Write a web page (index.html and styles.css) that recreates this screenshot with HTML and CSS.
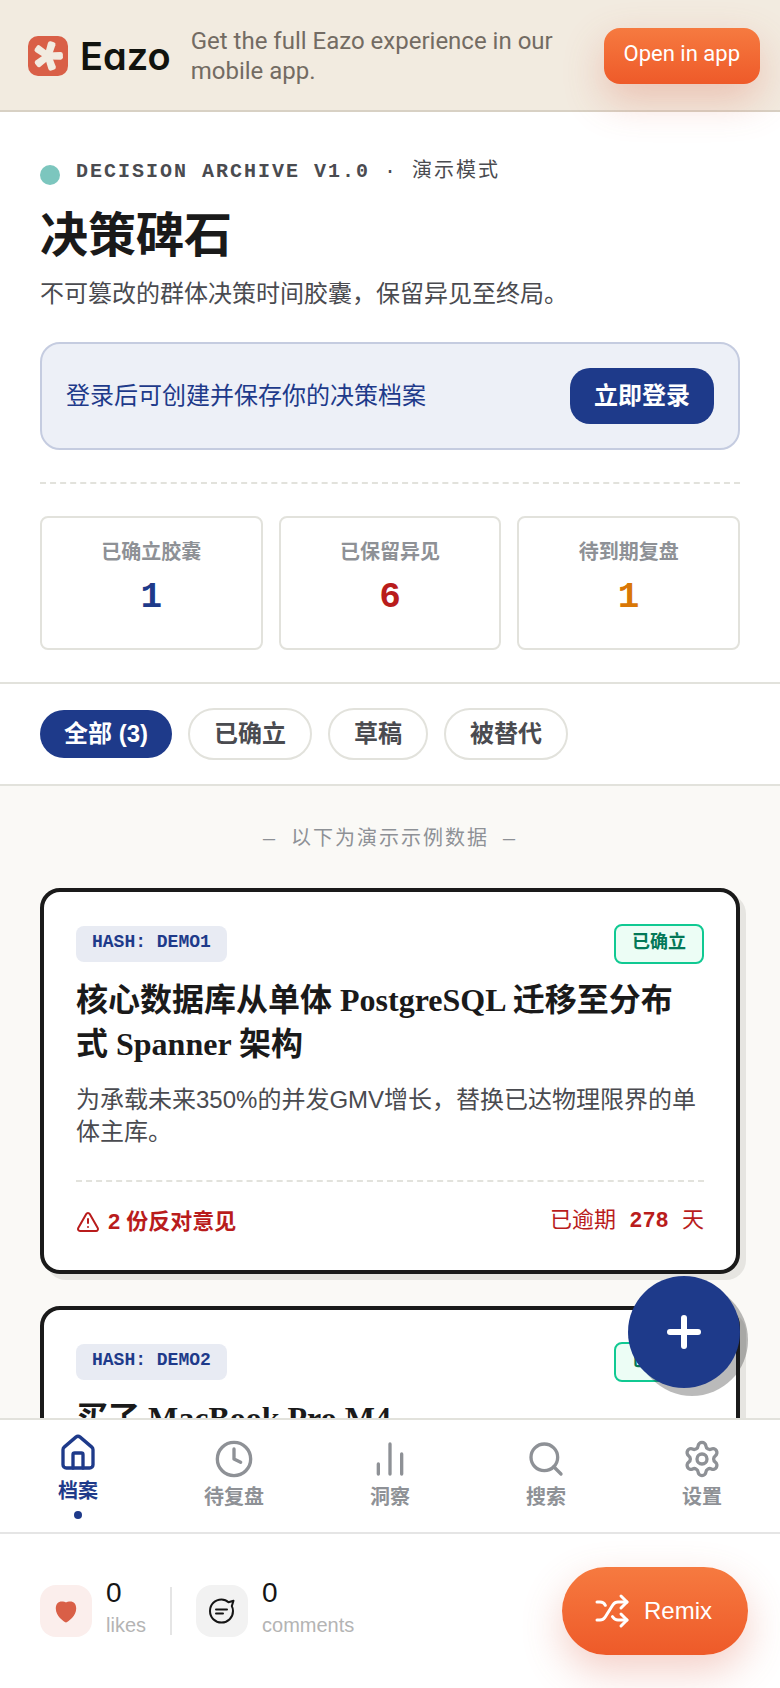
FILE: index.html
```html
<!DOCTYPE html>
<html lang="zh-CN">
<head>
  <meta charset="UTF-8" />
  <meta name="viewport" content="width=device-width, initial-scale=1.0"/>
  <title>决策碑石</title>
  <link rel="stylesheet" href="styles.css">
</head>
<body>

<div class="banner">
  <a class="logo" href="#">
    <svg width="40" height="40" viewBox="0 0 40 40" aria-hidden="true">
      <rect width="40" height="40" rx="10" fill="#d95f47"/>
      <g fill="#f2ebe0" transform="translate(20 20)">
        <path id="petalo" d="M-3.400 1 L-3.900 -12.500 Q-3.900 -14.800 -1.600 -14.900 L1.600 -14.900 Q3.900 -14.800 3.900 -12.500 L3.400 1 Z" transform="rotate(17)"/>
        <use href="#petalo" transform="rotate(72)"/>
        <use href="#petalo" transform="rotate(144)"/>
        <use href="#petalo" transform="rotate(216)"/>
        <use href="#petalo" transform="rotate(288)"/>
      </g>
    </svg>
    <span>Eazo</span>
  </a>
  <p>Get the full Eazo experience in our mobile app.</p>
  <button class="open-app">Open in app</button>
</div>

<main class="content">
  <header class="hero">
    <div class="version">
      <span class="dot"></span>
      <p><strong>DECISION ARCHIVE V1.0</strong> · 演示模式</p>
    </div>
    <h1>决策碑石</h1>
    <p class="subtitle">不可篡改的群体决策时间胶囊，保留异见至终局。</p>

    <div class="login">
      <p>登录后可创建并保存你的决策档案</p>
      <button>立即登录</button>
    </div>

    <div class="stats">
      <div class="stat">
        <h2>已确立胶囊</h2>
        <p class="blue">1</p>
      </div>
      <div class="stat">
        <h2>已保留异见</h2>
        <p class="red">6</p>
      </div>
      <div class="stat">
        <h2>待到期复盘</h2>
        <p class="amber">1</p>
      </div>
    </div>
  </header>

  <div class="filters">
    <button class="active">全部 (3)</button>
    <button>已确立</button>
    <button>草稿</button>
    <button>被替代</button>
  </div>

  <section class="list">
    <p class="notice">— 以下为演示示例数据 —</p>

    <article class="card">
      <div class="card-top">
        <span class="hash">HASH: DEMO1</span>
        <span class="status">已确立</span>
      </div>
      <h3>核心数据库从单体 PostgreSQL 迁移至分布式 Spanner 架构</h3>
      <p class="desc">为承载未来350%的并发GMV增长，替换已达物理限界的单体主库。</p>
      <div class="card-bottom">
        <span class="against">
          <svg class="icon" width="24" height="24" viewBox="0 0 24 24" aria-hidden="true">
            <path d="m21.730 18-8-14a2 2 0 0 0-3.480 0l-8 14A2 2 0 0 0 4 21h16a2 2 0 0 0 1.730-3"/>
            <path d="M12 9v4"/>
            <path d="M12 17h.01"/>
          </svg>
          2 份反对意见
        </span>
        <span class="overdue">已逾期 <strong>278</strong> 天</span>
      </div>
    </article>

    <article class="card">
      <div class="card-top">
        <span class="hash">HASH: DEMO2</span>
        <span class="status">已确立</span>
      </div>
      <h3>买了 MacBook Pro M4</h3>
    </article>
  </section>

  <button class="fab" aria-label="新建">
    <svg class="icon" width="48" height="48" viewBox="0 0 24 24" aria-hidden="true">
      <path d="M5 12h14"/>
      <path d="M12 5v14"/>
    </svg>
  </button>
</main>

<nav class="tabs">
  <a class="active" href="#">
    <svg class="icon" width="40" height="40" viewBox="0 0 24 24" aria-hidden="true">
      <path d="M15 21v-8a1 1 0 0 0-1-1h-4a1 1 0 0 0-1 1v8"/>
      <path d="M3 10a2 2 0 0 1 .709-1.528l7-5.999a2 2 0 0 1 2.582 0l7 5.999A2 2 0 0 1 21 10v9a2 2 0 0 1-2 2H5a2 2 0 0 1-2-2z"/>
    </svg>
    档案
  </a>
  <a href="#">
    <svg class="icon" width="40" height="40" viewBox="0 0 24 24" aria-hidden="true">
      <circle cx="12" cy="12" r="10"/>
      <path d="M12 6v6l4 2"/>
    </svg>
    待复盘
  </a>
  <a href="#">
    <svg class="icon" width="40" height="40" viewBox="0 0 24 24" aria-hidden="true">
      <path d="M5 21v-6"/>
      <path d="M12 21V3"/>
      <path d="M19 21V9"/>
    </svg>
    洞察
  </a>
  <a href="#">
    <svg class="icon" width="40" height="40" viewBox="0 0 24 24" aria-hidden="true">
      <circle cx="11" cy="11" r="8"/>
      <path d="m21 21-4.340-4.340"/>
    </svg>
    搜索
  </a>
  <a href="#">
    <svg class="icon" width="40" height="40" viewBox="0 0 24 24" aria-hidden="true">
      <path d="M9.671 4.136a2.340 2.340 0 0 1 4.659 0 2.340 2.340 0 0 0 3.319 1.915 2.340 2.340 0 0 1 2.330 4.033 2.340 2.340 0 0 0 0 3.831 2.340 2.340 0 0 1-2.330 4.033 2.340 2.340 0 0 0-3.319 1.915 2.340 2.340 0 0 1-4.659 0 2.340 2.340 0 0 0-3.320-1.915 2.340 2.340 0 0 1-2.330-4.033 2.340 2.340 0 0 0 0-3.831A2.340 2.340 0 0 1 6.350 6.051a2.340 2.340 0 0 0 3.319-1.915"/>
      <circle cx="12" cy="12" r="3"/>
    </svg>
    设置
  </a>
</nav>

<footer class="social">
  <button class="count">
    <span class="tile like">
      <svg width="24" height="24" viewBox="0 0 24 24" aria-hidden="true">
        <path fill="#d95f47" d="M12 23.500C9.500 22.500 1.800 17 1.800 9.500 1.800 5 4.200 2.500 7.800 2.500c1.700 0 3.200.3 4.200 1 1-.7 2.500-1 4.200-1 3.600 0 6 2.500 6 7C22.200 17 14.500 22.500 12 23.500z"/>
      </svg>
    </span>
    <span class="number"><b>0</b>likes</span>
  </button>
  <span class="divider"></span>
  <button class="count">
    <span class="tile">
      <svg class="icon" width="28" height="28" viewBox="0 0 28 28" aria-hidden="true">
        <path d="M20.500 5.300C18.600 3.400 16 2.500 13.500 2.500 7 2.500 2 7.500 2 14s5 11.500 11.500 11.500S25 20.500 25 14c0-1.700-.4-3.400-1.200-4.900L25.500 3.800z"/>
        <path d="M8 12.500h11M8 16.500h7"/>
      </svg>
    </span>
    <span class="number"><b>0</b>comments</span>
  </button>
  <button class="remix">
    <svg class="icon" width="36" height="36" viewBox="0 0 24 24" aria-hidden="true">
      <path d="m18 14 4 4-4 4"/>
      <path d="m18 2 4 4-4 4"/>
      <path d="M2 18h1.973a4 4 0 0 0 3.300-1.700l5.454-8.600a4 4 0 0 1 3.300-1.700H22"/>
      <path d="M2 6h1.972a4 4 0 0 1 3.600 2.200"/>
      <path d="M22 18h-6.041a4 4 0 0 1-3.300-1.800l-.359-.45"/>
    </svg>
    Remix
  </button>
</footer>

</body>
</html>
```
FILE: styles.css
```css
* {
  box-sizing: border-box;
}

body {
  margin: 0;
  height: 100vh;
  display: flex;
  flex-direction: column;
  overflow: hidden;
  background: white;
  color: #4a4b50;
  font-family: "Liberation Sans", "Noto Sans CJK SC", sans-serif;
  font-size: 24px;
  line-height: 32px;
}

h1, h2, h3, p {
  margin: 0;
}

button {
  font: inherit;
  border: none;
  padding: 0;
  cursor: pointer;
}

a {
  color: inherit;
  text-decoration: none;
}

.icon {
  flex-shrink: 0;
  fill: none;
  stroke: currentColor;
  stroke-width: 2;
  stroke-linecap: round;
  stroke-linejoin: round;
}

.banner {
  position: relative;
  z-index: 1;
  display: flex;
  align-items: center;
  gap: 20px;
  padding: 26px 20px 24px 28px;
  background: #f2ebe0;
  border-bottom: 2px solid #d8d1c4;
  font-family: Roboto, sans-serif;
}

.logo {
  display: flex;
  align-items: center;
  gap: 12px;
  color: #11130e;
  font-family: Inter, sans-serif;
  font-size: 38px;
  font-weight: 600;
  font-feature-settings: "cv11";
}

.logo svg {
  flex-shrink: 0;
}

.banner p {
  flex: 1;
  max-width: 380px;
  line-height: 30px;
  color: #736b63;
}

.open-app {
  flex-shrink: 0;
  margin-left: auto;
  padding: 10px 20px 14px;
  border-radius: 16px;
  background: linear-gradient(#f67a40, #ee5a29);
  box-shadow: 0 16px 40px rgba(217, 95, 71, 0.3);
  color: white;
  font-size: 22px;
}

.content {
  position: relative;
  flex: 1;
  min-height: 0;
  overflow: hidden;
  background: #faf9f6;
}

.hero {
  padding: 44px 40px 32px;
  background: white;
  border-bottom: 2px solid #e2e2dc;
}

.version {
  display: flex;
  align-items: center;
  gap: 16px;
  font-family: "Liberation Mono", "Noto Sans CJK SC", monospace;
  font-size: 20px;
  letter-spacing: 2px;
}

.version p {
  padding-bottom: 6px;
}

.dot {
  width: 20px;
  height: 20px;
  border-radius: 50%;
  background: #7cc6be;
}

.hero h1 {
  margin-top: 12px;
  font-size: 48px;
  line-height: 60px;
  color: #1a1a1a;
}

.subtitle {
  margin-top: 12px;
}

.login {
  display: flex;
  justify-content: space-between;
  align-items: center;
  margin-top: 32px;
  padding: 24px;
  border: 2px solid #c5cce0;
  border-radius: 20px;
  background: #edf0f7;
  color: #1e3a8a;
}

.login button {
  padding: 12px 24px;
  border-radius: 20px;
  background: #1e3a8a;
  color: white;
  font-weight: bold;
}

.stats {
  display: grid;
  grid-template-columns: repeat(3, 1fr);
  gap: 16px;
  margin-top: 32px;
  padding-top: 32px;
  border-top: 2px dashed #e2e2dc;
}

.stat {
  padding: 18px 16px 26px;
  border: 2px solid #e2e2dc;
  border-radius: 8px;
  text-align: center;
}

.stat h2 {
  font-size: 20px;
  color: #8e9196;
}

.stat p {
  margin-top: 6px;
  font-family: "Liberation Mono", monospace;
  font-size: 36px;
  font-weight: bold;
  line-height: 48px;
}

.stat .blue { color: #1e3a8a; }
.stat .red { color: #b91c1c; }
.stat .amber { color: #d97706; }

.filters {
  display: flex;
  align-items: center;
  gap: 16px;
  padding: 24px 40px;
  background: white;
  border-bottom: 2px solid #e2e2dc;
}

.filters button {
  padding: 8px 24px;
  border: 2px solid #e2e2dc;
  border-radius: 26px;
  background: white;
  color: #4a4b50;
  font-weight: bold;
}

.filters .active {
  border: none;
  background: #1e3a8a;
  color: white;
}

.list {
  display: flex;
  flex-direction: column;
  gap: 32px;
  padding: 38px 40px;
}

.notice {
  text-align: center;
  font-family: "Liberation Mono", "Noto Sans CJK SC", monospace;
  font-size: 20px;
  letter-spacing: 2px;
  color: #8e9196;
}

.card {
  padding: 32px;
  border: 4px solid #1a1a1a;
  border-radius: 20px;
  background: white;
  box-shadow: 6px 6px 0 #e6e5e1;
}

.card-top {
  display: flex;
  justify-content: space-between;
  align-items: center;
  font-size: 18px;
  font-weight: bold;
  line-height: 24px;
}

.hash {
  padding: 4px 16px 8px;
  border-radius: 8px;
  background: #e8ebf3;
  color: #1e3a8a;
  font-family: "Liberation Mono", monospace;
}

.status {
  padding: 4px 16px 8px;
  border: 2px solid #10c992;
  border-radius: 8px;
  background: #ecfdf5;
  color: #047857;
}

.card h3 {
  margin-top: 14px;
  font-family: "Liberation Serif", "Noto Sans CJK SC", serif;
  font-size: 32px;
  line-height: 44px;
  color: #1a1a1a;
}

.desc {
  margin-top: 18px;
}

.card-bottom {
  display: flex;
  justify-content: space-between;
  margin-top: 32px;
  padding-top: 24px;
  border-top: 2px dashed #e2e2dc;
  font-size: 22px;
  color: #b91c1c;
}

.against {
  display: flex;
  align-items: center;
  gap: 8px;
  font-weight: bold;
}

.overdue {
  font-family: "Liberation Mono", "Noto Sans CJK SC", monospace;
}

.fab {
  position: absolute;
  right: 40px;
  bottom: 30px;
  display: flex;
  justify-content: center;
  align-items: center;
  width: 112px;
  height: 112px;
  border-radius: 50%;
  background: #1e3a8a;
  box-shadow: 8px 8px 0 rgba(26, 26, 26, 0.3);
  color: white;
}

.fab .icon {
  stroke-width: 3;
}

.tabs {
  display: grid;
  grid-template-columns: repeat(5, 1fr);
  height: 114px;
  border-top: 2px solid #e2e2dc;
  background: white;
}

.tabs a {
  display: flex;
  flex-direction: column;
  justify-content: center;
  align-items: center;
  gap: 2px;
  color: #8e9196;
  font-size: 20px;
  font-weight: bold;
}

.tabs .active {
  color: #1e3a8a;
}

.tabs .active::after {
  content: "";
  width: 8px;
  height: 8px;
  margin-top: 2px;
  border-radius: 50%;
  background: #1e3a8a;
}

.social {
  display: flex;
  align-items: center;
  gap: 24px;
  height: 156px;
  padding: 0 32px 0 40px;
  border-top: 2px solid #e5e5e5;
}

.count {
  display: flex;
  align-items: center;
  gap: 14px;
  background: none;
  color: #b4b4b4;
  font-size: 20px;
  text-align: left;
}

.tile {
  display: flex;
  justify-content: center;
  align-items: center;
  width: 52px;
  height: 52px;
  border-radius: 16px;
  background: #f2f2f2;
  color: #151515;
}

.like {
  background: #fbeeec;
}

.number {
  padding-bottom: 4px;
}

.number b {
  display: block;
  color: #151515;
  font-size: 28px;
  font-weight: normal;
}

.divider {
  width: 2px;
  height: 48px;
  background: #e5e5e5;
}

.remix {
  display: flex;
  align-items: center;
  gap: 14px;
  height: 88px;
  margin-left: auto;
  padding: 0 36px 0 32px;
  border-radius: 44px;
  background: linear-gradient(#f67a40, #ee5a29);
  box-shadow: 0 16px 40px rgba(217, 95, 71, 0.3);
  color: white;
}
```
